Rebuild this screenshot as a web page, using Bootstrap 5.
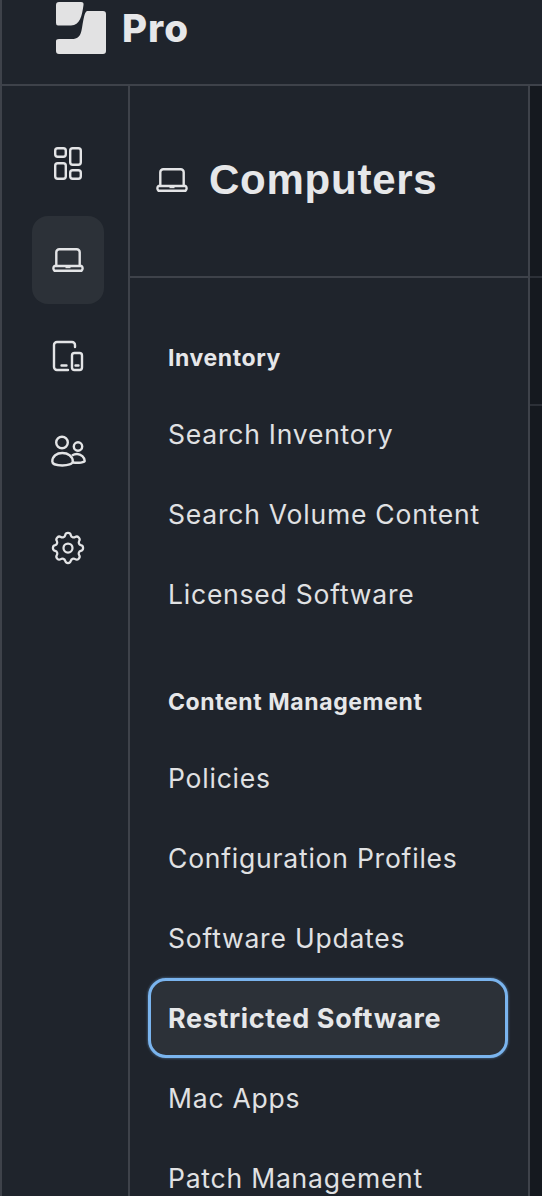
<!DOCTYPE html>
<html lang="en">
<head>
<meta charset="utf-8">
<title>Computers</title>
<link href="https://cdn.jsdelivr.net/npm/bootstrap@5.3.0/dist/css/bootstrap.min.css" rel="stylesheet">
<style>
html,body{height:100%;overflow:hidden;background:#1f242c}
body{font-family:Inter,"Liberation Sans",sans-serif;color:#e6e7e9}
.app-shell{height:1196px;border-left:2px solid #3e424a}
.top-strip{height:86px;border-bottom:2px solid #3e424a;padding-left:54px;overflow:hidden}
.brand-mark{width:50px;height:52px;margin-top:2px;flex:none}
.brand-word{font-size:38.5px;font-weight:800;line-height:1;margin-left:16px;height:56px;letter-spacing:1px;color:#e6e7e9}
.body-row{height:1110px}
.icon-rail{width:128px;flex:none;border-right:2px solid #3e424a;padding-top:34px;gap:8px}
.rail-btn{width:72px;height:88px;margin-left:30px;border-radius:16px;color:#e3e4e6}
.rail-btn svg{width:48px;height:48px}
.rail-btn svg.gear-glyph{width:40px;height:40px}
.rail-btn.is-current{background:#2c3138}
.side-panel{width:400px;flex:none;border-right:2px solid #3e424a}
.panel-head{height:192px;border-bottom:2px solid #3e424a;padding-left:18px;padding-bottom:2px}
.panel-head svg{width:48px;height:48px;color:#e3e4e6;flex:none}
.panel-title{font-family:"Liberation Sans",Arial,sans-serif;font-size:42px;font-weight:700;line-height:1;margin:0 0 0 13px;color:#e6e7e9;letter-spacing:.75px}
.menu-wrap{padding:60px 20px 0 18px}
.menu-group{font-size:23px;font-weight:700;line-height:40px;padding-left:20px;margin-bottom:19px;letter-spacing:.6px;color:#e6e7e9}
.menu-wrap .menu-link{display:block;height:76px;margin-bottom:4px;padding:0 18px;font-size:26.5px;line-height:70px;letter-spacing:.78px;white-space:nowrap;color:#e0e1e3;background:none;border:2px solid transparent;border-radius:16px;text-decoration:none}
.menu-wrap .menu-link.is-focus{font-size:27px;font-weight:700;letter-spacing:.62px;height:80px;background:#2c3138;border:3px solid #7ab4ee;border-radius:18px;line-height:76px;padding:0 17px;margin-top:-3px;margin-bottom:3px;box-shadow:0 0 2px 1px rgba(122,180,238,.3);color:#e6e7e9}
.menu-spacer{height:45px}
.main-zone{flex:1;background:#15191f}
.main-zone .rule-a,.main-zone .rule-b{border-bottom:2px solid #2c3037}
.rule-a{height:192px}
.rule-b{height:128px}
</style>
</head>
<body>
<div class="app-shell d-flex flex-column">
  <div class="top-strip d-flex align-items-start">
    <svg class="brand-mark" viewBox="0 0 50 52" aria-hidden="true">
      <path d="M3 0H25Q28 0 27.500 3C26 14 24 23 15 23.500H2Q0 23.500 0 21V3Q0 0 3 0Z" fill="#e2e2e3"/>
      <path d="M31 9H47Q50 9 50 12V49Q50 52 47 52H3Q0 52 0 49V39Q0 37 3 37H16C27 37 25 27 28 15Q29 10 31 9Z" fill="#e2e2e3"/>
    </svg>
    <span class="brand-word d-flex align-items-center">Pro</span>
  </div>
  <div class="body-row d-flex">
    <nav class="icon-rail d-flex flex-column">
      <a class="rail-btn d-flex align-items-center justify-content-center" href="#" aria-label="Dashboard">
        <svg viewBox="0 0 48 48" fill="none" stroke="currentColor" stroke-width="2.400"><rect x="11.200" y="8.200" width="10.600" height="8.600" rx="2.500"/><rect x="11.200" y="23.200" width="10.600" height="15.600" rx="2.500"/><rect x="26.200" y="8.200" width="10.600" height="16.600" rx="2.500"/><rect x="26.200" y="30.200" width="10.600" height="8.600" rx="2.500"/></svg>
      </a>
      <a class="rail-btn is-current d-flex align-items-center justify-content-center" href="#" aria-label="Computers">
        <svg viewBox="0 0 48 48" fill="none" stroke="currentColor" stroke-width="2.400" stroke-linejoin="round"><path d="M12.300 30V16.300a3 3 0 0 1 3-3h17.400a3 3 0 0 1 3 3V30"/><path d="M10.500 30h27a3 3 0 0 1 0 4.700h-27a3 3 0 0 1 0-4.700Z"/><path d="M21.500 31h5"/></svg>
      </a>
      <a class="rail-btn d-flex align-items-center justify-content-center" href="#" aria-label="Devices">
        <svg viewBox="0 0 48 48" fill="none" stroke="currentColor" stroke-width="2.400" stroke-linecap="round"><path d="M31 15v-2a3 3 0 0 0-3-3H13a3 3 0 0 0-3 3v22a3 3 0 0 0 3 3h11"/><rect x="28" y="21" width="10" height="17" rx="2.500"/><path d="M17.500 33.500h5M31.500 33.500h3"/></svg>
      </a>
      <a class="rail-btn d-flex align-items-center justify-content-center" href="#" aria-label="Users">
        <svg viewBox="0 0 48 48" fill="none" stroke="currentColor" stroke-width="2.400"><circle cx="18" cy="14.500" r="5.800"/><circle cx="34" cy="18.500" r="4.200"/><path d="M8.300 33.500c0-5.500 4.500-8.500 10-8.500s10.500 3 10.500 8.500c0 2.500-5 4-10.500 4s-10-1.500-10-4Z"/><path d="M28 27.500c1.500-1 3.500-1.500 5-1.500 4 0 7.700 3.500 7.700 7 0 1.500-6 2.200-11.700 1.500"/></svg>
      </a>
      <a class="rail-btn d-flex align-items-center justify-content-center" href="#" aria-label="Settings">
        <svg class="gear-glyph" viewBox="0 0 24 24" fill="none" stroke="currentColor" stroke-width="1.350" stroke-linejoin="round"><circle cx="12" cy="12" r="2.700"/><path d="M10.300 4.300c.4-1.800 3-1.800 3.400 0a1.700 1.700 0 0 0 2.600 1.100c1.500-1 3.400.9 2.400 2.400a1.700 1.700 0 0 0 1 2.500c1.800.4 1.800 3 0 3.400a1.700 1.700 0 0 0-1 2.600c1 1.500-.9 3.400-2.400 2.400a1.700 1.700 0 0 0-2.600 1c-.4 1.800-3 1.800-3.400 0a1.700 1.700 0 0 0-2.600-1c-1.500 1-3.400-.9-2.400-2.400a1.700 1.700 0 0 0-1-2.600c-1.800-.4-1.800-3 0-3.400a1.700 1.700 0 0 0 1-2.500c-1-1.500.9-3.400 2.400-2.400a1.700 1.700 0 0 0 2.600-1.100Z"/></svg>
      </a>
    </nav>
    <aside class="side-panel">
      <div class="panel-head d-flex align-items-center">
        <svg viewBox="0 0 48 48" fill="none" stroke="currentColor" stroke-width="2.400" stroke-linejoin="round"><path d="M12.300 30V16.300a3 3 0 0 1 3-3h17.400a3 3 0 0 1 3 3V30"/><path d="M10.500 30h27a3 3 0 0 1 0 4.700h-27a3 3 0 0 1 0-4.700Z"/><path d="M21.500 31h5"/></svg>
        <h1 class="panel-title">Computers</h1>
      </div>
      <div class="menu-wrap">
        <div class="menu-group">Inventory</div>
        <a class="menu-link" href="#">Search Inventory</a>
        <a class="menu-link" href="#">Search Volume Content</a>
        <a class="menu-link" href="#">Licensed Software</a>
        <div class="menu-spacer"></div>
        <div class="menu-group">Content Management</div>
        <a class="menu-link" href="#">Policies</a>
        <a class="menu-link" href="#">Configuration Profiles</a>
        <a class="menu-link" href="#">Software Updates</a>
        <a class="menu-link is-focus" href="#">Restricted Software</a>
        <a class="menu-link" href="#">Mac Apps</a>
        <a class="menu-link" href="#">Patch Management</a>
      </div>
    </aside>
    <main class="main-zone">
      <div class="rule-a"></div>
      <div class="rule-b"></div>
    </main>
  </div>
</div>
<script src="https://cdn.jsdelivr.net/npm/bootstrap@5.3.0/dist/js/bootstrap.bundle.min.js"></script>
</body>
</html>
